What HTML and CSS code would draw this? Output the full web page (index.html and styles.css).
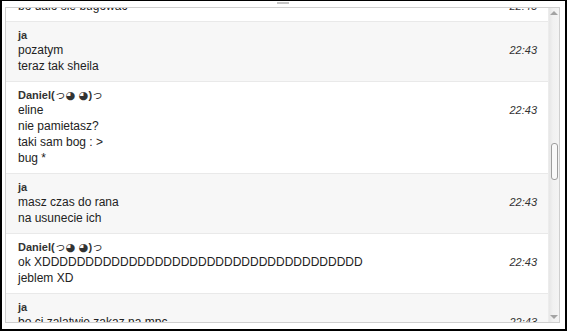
FILE: index.html
```html
<!DOCTYPE html>
<html>
<head>
<meta charset="utf-8">
<link rel="stylesheet" href="styles.css">
</head>
<body>
<div class="frame">
  <span class="grip"></span>
  <div class="box">
    <div class="list">
      <div class="msg">
        <div class="name">ja</div>
        <div class="body">
          <div class="lines"><div>bo dalo sie bugowac</div></div>
          <div class="time">22:43</div>
        </div>
      </div>
      <div class="msg alt">
        <div class="name">ja</div>
        <div class="body">
          <div class="lines"><div>pozatym</div><div>teraz tak sheila</div></div>
          <div class="time">22:43</div>
        </div>
      </div>
      <div class="msg">
        <div class="name">Daniel(<span class="face">っ◕ ◕</span>)<span class="face">っ</span></div>
        <div class="body">
          <div class="lines"><div>eline</div><div>nie pamietasz?</div><div>taki sam bog : &gt;</div><div>bug *</div></div>
          <div class="time">22:43</div>
        </div>
      </div>
      <div class="msg alt">
        <div class="name">ja</div>
        <div class="body">
          <div class="lines"><div>masz czas do rana</div><div>na usunecie ich</div></div>
          <div class="time">22:43</div>
        </div>
      </div>
      <div class="msg">
        <div class="name">Daniel(<span class="face">っ◕ ◕</span>)<span class="face">っ</span></div>
        <div class="body">
          <div class="lines"><div>ok XDDDDDDDDDDDDDDDDDDDDDDDDDDDDDDDDDDDDD</div><div>jeblem XD</div></div>
          <div class="time">22:43</div>
        </div>
      </div>
      <div class="msg alt">
        <div class="name">ja</div>
        <div class="body">
          <div class="lines"><div>bo ci zalatwie zakaz na mpc</div></div>
          <div class="time">22:43</div>
        </div>
      </div>
    </div>
    <div class="scrollbar">
      <div class="arrow up"></div>
      <div class="track"><div class="thumb"></div></div>
      <div class="arrow down"></div>
    </div>
  </div>
</div>
</body>
</html>
```
FILE: styles.css
```css
html, body {
  margin: 0;
  padding: 0;
  background: #fff;
}
.frame {
  position: relative;
  width: 567px;
  height: 331px;
  box-sizing: border-box;
  border: 2px solid #000;
  border-top-width: 1px;
  padding: 6px 5px 6px 3px;
  font-family: "Liberation Sans", Arial, "Noto Sans CJK JP", sans-serif;
}
.grip {
  position: absolute;
  left: 275px;
  top: 1px;
  width: 12px;
  height: 2px;
  background: #c4c4c4;
}
.box {
  height: 100%;
  box-sizing: border-box;
  border: 1px solid #cfcfcf;
  display: flex;
  overflow: hidden;
}
.list {
  flex: 1;
  overflow: hidden;
}
.list > .msg:first-child {
  margin-top: -31px;
}
.msg {
  border-top: 1px solid #e9e9e9;
  padding: 7px 11px 7px 12px;
  background: #fff;
}
.msg.alt {
  background: #f7f7f7;
}
.name {
  font-size: 11px;
  line-height: 13px;
  font-weight: bold;
  color: #333;
}
.face {
  font-family: "DejaVu Sans", "Noto Sans CJK JP", sans-serif;
  font-weight: normal;
  font-size: 11px;
}
.body {
  display: flex;
  justify-content: space-between;
  align-items: flex-start;
}
.lines {
  font-size: 12px;
  line-height: 16px;
  color: #222;
}
.time {
  font-size: 11px;
  line-height: 16px;
  font-style: italic;
  color: #333;
}
.scrollbar {
  width: 10px;
  display: flex;
  flex-direction: column;
  background: linear-gradient(to right, #e6e6e6, #f1f1f1 40%, #f4f4f4);
  border-left: 1px solid #ececec;
}
.arrow {
  height: 10px;
  display: flex;
  align-items: center;
  justify-content: center;
}
.arrow::before {
  content: "";
  width: 0;
  height: 0;
  border-left: 4px solid transparent;
  border-right: 4px solid transparent;
}
.arrow.up::before {
  border-bottom: 4px solid #a3a3a3;
}
.arrow.down::before {
  border-top: 4px solid #a3a3a3;
}
.track {
  flex: 1;
  display: flex;
  justify-content: center;
}
.thumb {
  margin-top: 125px;
  width: 5px;
  height: 35px;
  border: 1px solid #9d9d9d;
  border-radius: 3px;
  background: #f9f9f9;
}
```
